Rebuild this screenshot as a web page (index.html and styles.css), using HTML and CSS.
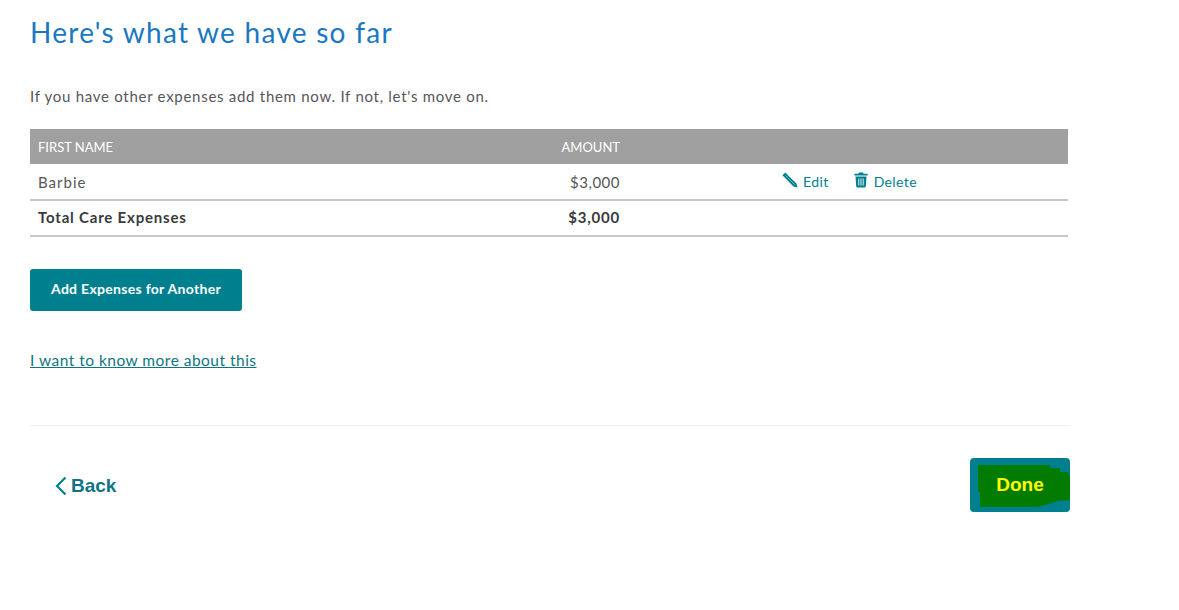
FILE: index.html
```html
<!DOCTYPE html>
<html lang="en">
<head>
<meta charset="utf-8">
<title>Here's what we have so far</title>
<link rel="stylesheet" href="styles.css">
</head>
<body>
<main class="page">
  <h1 class="title">Here's what we have so far</h1>
  <p class="intro">If you have other expenses add them now. If not, let's move on.</p>
  <div class="table">
    <div class="row head">
      <div class="c-name">FIRST NAME</div>
      <div class="c-amt">AMOUNT</div>
      <div class="c-act"></div>
    </div>
    <div class="row body">
      <div class="c-name">Barbie</div>
      <div class="c-amt">$3,000</div>
      <div class="c-act">
        <a class="act act-edit" href="#">
          <svg class="ico" width="16" height="16" viewBox="0 0 16 16"><path d="M.4 3.300 3.200.5 14.400 11.500 15.600 15.600 11.500 14.400z" fill="#00808f"/><path d="M3.400 3.400 12.800 12.800" stroke="#fff" stroke-width=".6" opacity=".75"/></svg>
          Edit</a>
        <a class="act" href="#">
          <svg class="ico" width="14" height="16" viewBox="0 0 14 16"><path d="M5 .6h4l.6 1.200H13a.7.7 0 0 1 .7.7v1H.3v-1a.7.7 0 0 1 .7-.7h3.400zM1.500 4.600h11l-.7 9.700a1.300 1.300 0 0 1-1.300 1.200h-7a1.300 1.300 0 0 1-1.300-1.200z" fill="#00808f"/><path d="M4.800 6.500v7M7 6.500v7M9.200 6.500v7" stroke="#fff" stroke-width=".9"/></svg>
          Delete</a>
      </div>
    </div>
    <div class="row total">
      <div class="c-name">Total Care Expenses</div>
      <div class="c-amt">$3,000</div>
      <div class="c-act"></div>
    </div>
  </div>
  <a class="btn-add" href="#">Add Expenses for Another</a>
  <a class="more" href="#">I want to know more about this</a>
  <hr class="rule">
  <nav class="nav">
    <a class="back" href="#">
      <svg class="chev" width="12" height="20" viewBox="0 0 12 20"><path d="M10.500 1.500 2 10l8.500 8.500" fill="none" stroke="#00808f" stroke-width="2.200"/></svg>
      Back</a>
    <a class="done" href="#">
      <svg class="scribble" width="100" height="54" viewBox="0 0 100 54"><path d="M8 7H80V10H90V14H98L100 20V42L88 43 78 46 68 49H10V34H8z" fill="#037a00"/></svg>
      <span class="done-label">Done</span>
    </a>
  </nav>
</main>
</body>
</html>
```
FILE: styles.css
```css
* { box-sizing: border-box; }
html, body { margin: 0; padding: 0; background: #fff; }
body { font-family: "Lato", "Noto Sans", sans-serif; color: #393a3d; }
.page { width: 1040px; margin-left: 30px; }
.title {
  margin: 0;
  padding-top: 12px;
  height: 73px;
  font-size: 28px;
  line-height: 40px;
  font-weight: 400;
  letter-spacing: 1.27px;
  color: #1a78c2;
}
.intro { margin: 0; height: 40px; padding-top: 13px; font-size: 15px; line-height: 20px; letter-spacing: .72px; color: #55565a; }
.table { width: 1038px; margin-top: 16px; }
.row { display: flex; align-items: center; }
.c-name { width: 348px; padding-left: 8px; }
.c-amt { width: 242px; text-align: right; }
.c-act { flex: 1; display: flex; padding-left: 162px; gap: 25px; }
.head { height: 35px; background: #a0a0a0; color: #fff; font-size: 13px; }
.body { height: 37px; border-bottom: 2px solid #c8c8c8; font-size: 15px; letter-spacing: .5px; color: #55565a; }
.body .c-name { letter-spacing: 1px; }
.total { height: 36px; padding-bottom: 2px; border-bottom: 2px solid #c8c8c8; font-size: 15px; font-weight: 700; letter-spacing: .8px; color: #393a3d; }
.act { display: flex; align-items: center; gap: 6px; color: #00808f; text-decoration: none; font-size: 14px; letter-spacing: .4px; }
.ico { display: block; margin-top: -3px; }
.act-edit { gap: 5px; }
.btn-add {
  display: flex;
  align-items: center;
  justify-content: center;
  width: 212px;
  height: 42px;
  margin-top: 32px;
  padding-bottom: 4px;
  background: #00808f;
  border-radius: 3px;
  color: #fff;
  font-size: 14px;
  font-weight: 700;
  letter-spacing: .3px;
  text-decoration: none;
}
.more { display: block; width: max-content; margin-top: 38px; font-size: 15.500px; line-height: 22px; letter-spacing: .48px; color: #0f7580; text-decoration: underline; }
.rule { height: 1px; margin: 54px 0 0; border: 0; background: #eeeeee; }
.nav { display: flex; justify-content: space-between; align-items: center; margin-top: 32px; height: 54px; }
.back { display: flex; align-items: center; gap: 4px; padding-left: 25px; padding-top: 1px; font-family: "Liberation Sans", Arial, sans-serif; font-size: 19px; font-weight: 700; color: #0e7382; text-decoration: none; }
.chev { display: block; }
.done {
  position: relative;
  display: flex;
  align-items: center;
  justify-content: center;
  width: 100px;
  height: 54px;
  background: #00808f;
  border-radius: 4px;
  text-decoration: none;
}
.scribble { position: absolute; left: 0; top: 0; }
.done-label { position: relative; font-family: "Liberation Sans", Arial, sans-serif; font-size: 19px; font-weight: 700; color: #ffff00; }
```
